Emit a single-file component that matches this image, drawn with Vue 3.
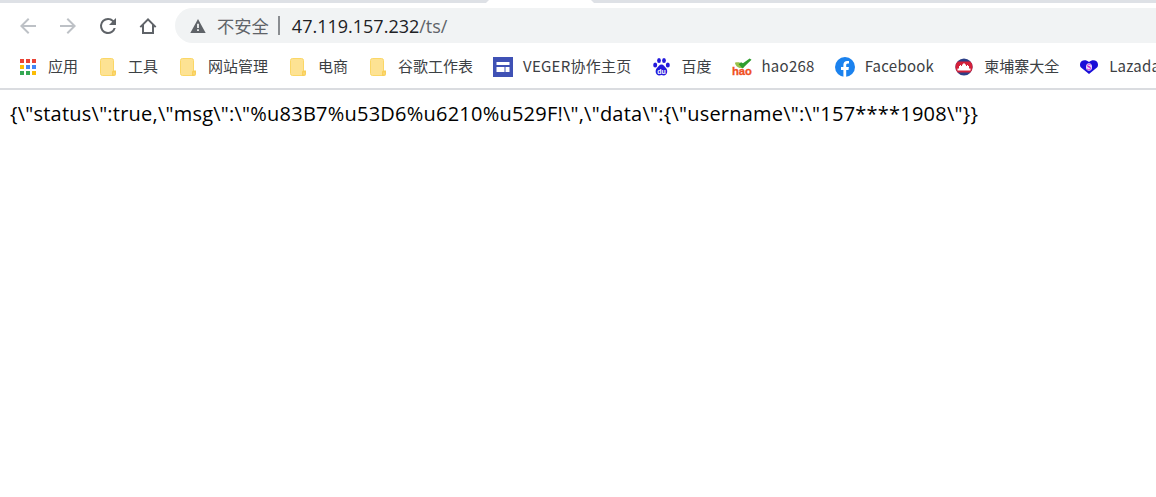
<script setup>
const bookmarks = [
  { label: '应用', icon: 'apps' },
  { label: '工具', icon: 'folder' },
  { label: '网站管理', icon: 'folder' },
  { label: '电商', icon: 'folder' },
  { label: '谷歌工作表', icon: 'folder' },
  { label: 'VEGER协作主页', icon: 'veger', latin: true },
  { label: '百度', icon: 'baidu' },
  { label: 'hao268', icon: 'hao', latin: true },
  { label: 'Facebook', icon: 'fb', latin: true },
  { label: '柬埔寨大全', icon: 'kh' },
  { label: 'Lazada', icon: 'laz', latin: true },
]
const appColors = ['#ea4335','#ea4335','#ea4335','#fbbc05','#4285f4','#4285f4','#34a853','#34a853','#fbbc05']
const body = '{\\"status\\":true,\\"msg\\":\\"%u83B7%u53D6%u6210%u529F!\\",\\"data\\":{\\"username\\":\\"157****1908\\"}}'
</script>

<template>
  <div class="page">
    <div class="tabstrip"><div class="activetab"></div></div>
    <div class="toolbar">
      <div class="navs">
        <svg class="nav" viewBox="0 0 24 24" width="24" height="24"><path d="M20 11H7.800l5.600-5.600L12 4l-8 8 8 8 1.400-1.400L7.800 13H20z" fill="#bdc1c6"/></svg>
        <svg class="nav" viewBox="0 0 24 24" width="24" height="24"><path d="M4 11h12.200l-5.600-5.600L12 4l8 8-8 8-1.400-1.400 5.600-5.600H4z" fill="#bdc1c6"/></svg>
        <svg class="nav" viewBox="0 0 24 24" width="24" height="24"><path d="M17.650 6.350A7.960 7.960 0 0 0 12 4a8 8 0 1 0 7.730 10h-2.080A6 6 0 1 1 12 6c1.660 0 3.140.69 4.220 1.780L13 11h7V4z" fill="#5f6368"/></svg>
        <svg class="nav" viewBox="0 0 24 24" width="24" height="24"><path d="M12 4 3.600 12.400 5 13.800l1-1V20h12v-7.200l1 1 1.400-1.400zM16 18H8v-7.200l4-4 4 4z" fill="#5f6368"/></svg>
      </div>
      <div class="omnibox">
        <svg class="warn" viewBox="0 0 16 16" width="16" height="16"><path d="M8 1 0.300 15h15.400zM8.900 13H7.100v-1.800h1.800zm0-3H7.100V5.800h1.800z" fill="#5f6368" fill-rule="evenodd"/></svg>
        <span class="insecure">不安全</span>
        <span class="sep"></span>
        <span class="url">47.119.157.232<span class="path">/ts/</span></span>
      </div>
    </div>
    <div class="bookmarks">
      <div v-for="b in bookmarks" :key="b.label" class="bm">
        <span class="slot">
          <svg v-if="b.icon==='apps'" viewBox="0 0 16 16" width="16" height="16">
            <rect v-for="(c,i) in appColors" :key="i" :x="(i%3)*6" :y="Math.floor(i/3)*6" width="4" height="4" :fill="c"/>
          </svg>
          <svg v-else-if="b.icon==='folder'" viewBox="0 0 16 18" width="16" height="18">
            <path d="M.5 2.500a2 2 0 0 1 2-2h9a2 2 0 0 1 2 2v15h-11a2 2 0 0 1-2-2z" fill="#fde293" stroke="#fbd766"/>
            <path d="M12 18h2a2 2 0 0 0 2-2v-3.500h-2.500a1.500 1.500 0 0 0-1.500 1.500z" fill="#f9cf58"/>
            <path d="M13.500 14.500h1v2h-1z" fill="#fde293"/>
          </svg>
          <svg v-else-if="b.icon==='veger'" viewBox="0 0 20 20" width="20" height="20">
            <rect width="20" height="20" fill="#3f51b5"/>
            <path d="M3.500 5h13v3h-13zM3.500 10h8v5h-8zM12.500 10h4v5h-4z" fill="#fff"/>
          </svg>
          <svg v-else-if="b.icon==='baidu'" viewBox="0 0 17 18" width="17" height="18">
            <g fill="#2319dc">
              <ellipse cx="2.200" cy="7" rx="2" ry="2.500"/>
              <ellipse cx="6" cy="2.600" rx="1.900" ry="2.500"/>
              <ellipse cx="11" cy="2.600" rx="1.900" ry="2.500"/>
              <ellipse cx="14.800" cy="7" rx="2" ry="2.500"/>
              <path d="M8.500 6.500c2.200 0 2.900 2.200 4.400 3.400 2 1.500 2 7-1.800 7.500-1 .1-1.800-.4-2.600-.4s-1.600.5-2.600.4C2 17 2 11.400 4 9.900 5.500 8.700 6.300 6.500 8.500 6.500z"/>
            </g>
            <text x="8.500" y="15.500" text-anchor="middle" class="logo-du">du</text>
          </svg>
          <svg v-else-if="b.icon==='hao'" viewBox="0 0 21 18" width="21" height="18">
            <path d="M3 4.500C6 3.500 8.500 4 10.500 5.500l2 4.500-4.500 0C5.500 9.500 3.700 7.500 3 4.500z" fill="#9bc14a"/>
            <path d="M7 6 11 10.500 20.500 1.500 18.500 0 11.500 5 9.500 4z" fill="#2e9e2e"/>
            <text x="0" y="17.800" textLength="21" lengthAdjust="spacingAndGlyphs" class="logo-hao">hao</text>
          </svg>
          <svg v-else-if="b.icon==='fb'" viewBox="0 0 20 20" width="20" height="20">
            <circle cx="10" cy="10" r="10" fill="#1b82ee"/>
            <path d="M8.400 20v-7H6v-3h2.400V7.800c0-2.500 1.500-3.800 3.700-3.800 1 0 1.900.1 1.900.1v2.500h-1.200c-1.200 0-1.600.8-1.600 1.500V10h2.700l-.4 3h-2.300v7z" fill="#fff"/>
          </svg>
          <svg v-else-if="b.icon==='kh'" viewBox="0 0 18 18" width="18" height="18">
            <defs><clipPath id="khc"><circle cx="9" cy="9" r="8.600"/></clipPath></defs>
            <g clip-path="url(#khc)">
              <rect width="18" height="18" fill="#2c3f86"/>
              <rect y="3.500" width="18" height="11" fill="#d3203a"/>
              <path d="M2.500 12.500v-2H4V8h1V7h1v1h1V6.500h1v-1h2v1h1V8h1V7h1v1h1v2.500h1.500v2z" fill="#fff"/>
            </g>
          </svg>
          <svg v-else-if="b.icon==='laz'" viewBox="0 0 18 14" width="18" height="14">
            <path d="M9 14 1 7.500C-.5 6-.3 2.800 1.500 1.300 3.500-.3 6.500-.2 9 2 11.500-.2 14.500-.3 16.500 1.300 18.300 2.800 18.500 6 17 7.500z" fill="#1a0dd8"/>
            <ellipse cx="9" cy="7" rx="3" ry="3.800" fill="#efe3fb"/>
            <text x="9" y="10" text-anchor="middle" class="logo-s">S</text>
          </svg>
        </span>
        <span class="bm-label" :class="{ latin: b.latin }">{{ b.label }}</span>
      </div>
    </div>
    <div class="content">{{ body }}</div>
  </div>
</template>

<style>
html, body { margin: 0; padding: 0; background: #fff; overflow: hidden; }
</style>

<style scoped>
.page { width: 1156px; height: 497px; background: #fff; overflow: hidden; font-family: "Liberation Sans", Arial, sans-serif; }
.tabstrip { height: 3px; background: #dee1e6; position: relative; }
.activetab { position: absolute; left: 486px; top: 0; width: 108px; height: 3px; background: #fff; clip-path: polygon(3px 0, 105px 0, 108px 100%, 0 100%); }
.toolbar { height: 42px; display: flex; align-items: flex-start; padding-top: 5px; box-sizing: border-box; background: #fff; }
.navs { height: 35px; display: flex; align-items: center; padding-left: 15.500px; gap: 16px; width: 175px; box-sizing: border-box; flex: none; }
.nav { flex: none; }
.omnibox { flex: 1; height: 35px; border-radius: 17.500px 0 0 17.500px; background: #f1f3f4; display: flex; align-items: center; padding-left: 15px; }
.warn { flex: none; }
.insecure { margin-left: 11px; font: 17.300px/20px "Noto Sans CJK SC", sans-serif; color: #5f6368; }
.sep { width: 2px; height: 19px; background: #8a8d91; margin: 0 12px 0 9px; }
.url { font: 18px "Open Sans", "Noto Sans", sans-serif; color: #202124; }
.path { color: #5f6368; }
.bookmarks { height: 45px; box-sizing: border-box; border-bottom: 2px solid #dadce0; display: flex; align-items: center; padding-left: 18px; white-space: nowrap; overflow: hidden; }
.bm { display: flex; align-items: center; height: 28px; flex: none; margin-right: 20px; }
.slot { width: 20px; height: 20px; display: flex; align-items: center; justify-content: center; flex: none; margin-right: 10px; }
.bm-label { font: 15px "Noto Sans CJK SC", "Noto Sans", sans-serif; color: #3c4043; padding-bottom: 2px; }
.latin { letter-spacing: .25px; }
.content { padding: 12px 10px; font: 20px/24px "Open Sans", "Noto Sans", sans-serif; letter-spacing: .23px; color: #000; white-space: nowrap; }
.logo-du { font: bold 7px "Liberation Sans", sans-serif; fill: #fff; }
.logo-hao { font: bold 11px "Liberation Sans", sans-serif; fill: #f0501e; stroke: #f0501e; stroke-width: .3px; }
.logo-s { font: bold 8px "Liberation Serif", serif; fill: #c918d6; }
</style>
